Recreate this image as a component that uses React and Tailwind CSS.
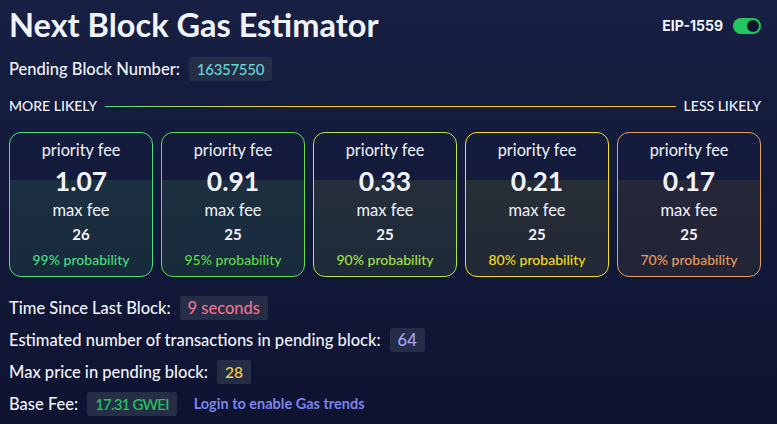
import React from "react";

const cards = [
  { prio: "1.07", max: "26", prob: "99% probability", border: "border-[#4fe07f]", text: "text-[#4ade80]", fill: "bg-[linear-gradient(to_bottom,transparent_47px,#1b3040_47px,#172a3c_100%)]" },
  { prio: "0.91", max: "25", prob: "95% probability", border: "border-[#62df48]", text: "text-[#5fd94a]", fill: "bg-[linear-gradient(to_bottom,transparent_47px,#1c3040_47px,#182a3b_100%)]" },
  { prio: "0.33", max: "25", prob: "90% probability", border: "border-[#b2e84a]", text: "text-[#a6e046]", fill: "bg-[linear-gradient(to_bottom,transparent_47px,#242f3b_47px,#1f2a39_100%)]" },
  { prio: "0.21", max: "25", prob: "80% probability", border: "border-[#f4e11a]", text: "text-[#f4de1a]", fill: "bg-[linear-gradient(to_bottom,transparent_47px,#282e35_47px,#222835_100%)]" },
  { prio: "0.17", max: "25", prob: "70% probability", border: "border-[#e6a060]", text: "text-[#e99a5a]", fill: "bg-[linear-gradient(to_bottom,transparent_47px,#262839_47px,#212436_100%)]" },
];

function Badge({ children, color, size = "text-[16.5px]" }) {
  return <span className={`ml-[9px] inline-flex h-[24px] items-center rounded-[2px] bg-[#262e47] px-[8px] font-medium ${size} ${color}`}>{children}</span>;
}

export default function App() {
  return (
    <div className="h-[424px] w-[777px] overflow-hidden bg-[linear-gradient(to_bottom,#172043,#0e1330)] pl-[9px] pr-[16px] text-[#f1f3fb] font-['Lato','Noto_Sans',sans-serif]">
      {/* header */}
      <div className="flex items-center justify-between pt-[5px]">
        <h1 className="text-[32.5px] font-bold leading-[40px]">Next Block Gas Estimator</h1>
        <div className="flex items-center gap-[10px] pt-[1px]">
          <span className="text-[14px] font-bold font-['Inter',sans-serif]">EIP-1559</span>
          <div className="flex h-[16px] w-[28px] items-center justify-end rounded-full bg-[#22c55e] pr-[2px]">
            <div className="h-[12px] w-[12px] rounded-full bg-[#0f1530]" />
          </div>
        </div>
      </div>

      <div className="mt-[12px] flex items-center text-[16.5px] font-medium leading-[24px]">
        <span>Pending Block Number:</span>
        <Badge color="text-[#62d6d3]" size="text-[15px] tracking-[-0.3px]">16357550</Badge>
      </div>

      {/* likelihood scale */}
      <div className="mt-[15px] flex items-center gap-[8px] text-[14px] font-medium leading-[20px]">
        <span>MORE LIKELY</span>
        <div className="h-px flex-1 bg-linear-to-r from-[#4ade80] via-[#facc15] via-35% to-[#fbbf24]" />
        <span>LESS LIKELY</span>
      </div>

      {/* cards */}
      <div className="mt-[16px] grid grid-cols-5 gap-[8px]">
        {cards.map((c) => (
          <div key={c.prio} className={`flex h-[145px] flex-col items-center rounded-[12px] border ${c.border} ${c.fill}`}>
            <div className="mt-[7px] text-[16.3px] leading-[20px]">priority fee</div>
            <div className="mt-[6px] text-[26.5px] font-bold leading-[30px]">{c.prio}</div>
            <div className="mt-[4px] text-[16.5px] leading-[20px]">max fee</div>
            <div className="mt-[4px] text-[15px] font-bold leading-[20px]">{c.max}</div>
            <div className={`mt-[7px] text-[14px] font-medium leading-[18px] ${c.text}`}>{c.prob}</div>
          </div>
        ))}
      </div>

      {/* stats */}
      <div className="mt-[19px] flex flex-col gap-[8px] text-[16.5px] font-medium leading-[24px]">
        <div className="flex items-center">
          <span>Time Since Last Block:</span>
          <Badge color="text-[#f0708f]">9 seconds</Badge>
        </div>
        <div className="flex items-center">
          <span>Estimated number of transactions in pending block:</span>
          <Badge color="text-[#a9a3f5]">64</Badge>
        </div>
        <div className="flex items-center">
          <span>Max price in pending block:</span>
          <Badge color="text-[#f6d04d]" size="text-[15.5px]">28</Badge>
        </div>
        <div className="flex items-center">
          <span>Base Fee:</span>
          <Badge color="text-[#22c55e]" size="text-[15px] tracking-[-0.8px]">17.31 GWEI</Badge>
          <span className="ml-[17px] text-[14.5px] font-bold text-[#7c83ec]">Login to enable Gas trends</span>
        </div>
      </div>
    </div>
  );
}
